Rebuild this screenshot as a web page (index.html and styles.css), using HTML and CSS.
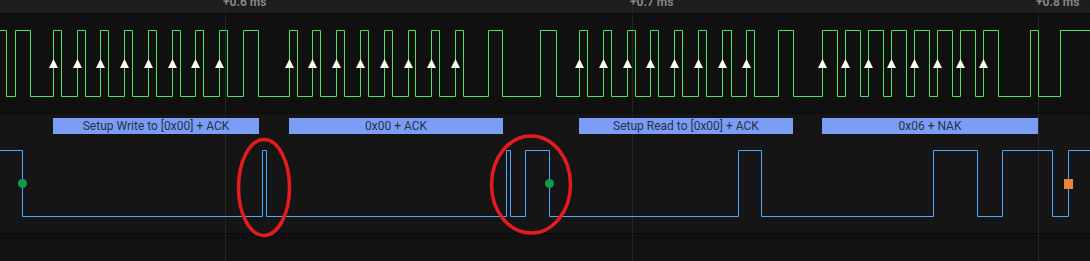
FILE: index.html
```html
<!DOCTYPE html>
<html lang="en">
<head>
    <meta charset="UTF-8">
    <title>I2C Capture</title>
    <link rel="stylesheet" href="styles.css">
</head>
<body>
    <div class="viewer">
        <!-- time ruler -->
        <div class="ruler">
            <span class="tick" style="left: 223px">+0.6 ms</span>
            <span class="tick" style="left: 630px">+0.7 ms</span>
            <span class="tick" style="left: 1036px">+0.8 ms</span>
        </div>

        <!-- SCL -->
        <div class="channel channel-scl">
            <svg class="wave" width="1090" height="99" viewBox="0 14 1090 99">
                <defs>
                    <path id="edge" d="M0.5 59 L-4 68 L5 68 Z" />
                </defs>
                <path class="trace scl" d="M0 30.5H6.5V96.5H15.5V30.5H30.5V96.5H53.5V30.5H61.5V96.5H77.5V30.5H85.5V96.5H100.5V30.5H108.5V96.5H124.5V30.5H132.5V96.5H148.5V30.5H156.5V96.5H172.5V30.5H180.5V96.5H195.5V30.5H203.5V96.5H219.5V30.5H227.5V96.5H243.5V30.5H258.5V96.5H289.5V30.5H297.5V96.5H312.5V30.5H320.5V96.5H336.5V30.5H344.5V96.5H360.5V30.5H368.5V96.5H384.5V30.5H392.5V96.5H408.5V30.5H415.5V96.5H431.5V30.5H439.5V96.5H455.5V30.5H463.5V96.5H488.5V30.5H502.5V96.5H540.5V30.5H556.5V96.5H579.5V30.5H587.5V96.5H603.5V30.5H611.5V96.5H627.5V30.5H635.5V96.5H650.5V30.5H658.5V96.5H674.5V30.5H682.5V96.5H698.5V30.5H706.5V96.5H722.5V30.5H731.5V96.5H746.5V30.5H754.5V96.5H778.5V30.5H793.5V96.5H822.5V30.5H837.5V96.5H845.5V30.5H860.5V96.5H868.5V30.5H883.5V96.5H891.5V30.5H906.5V96.5H914.5V30.5H929.5V96.5H937.5V30.5H952.5V96.5H960.5V30.5H975.5V96.5H983.5V30.5H998.5V96.5H1030.5V30.5H1038.5V96.5H1060.5V30.5H1090" />
                <g class="marker">
                    <use href="#edge" x="53" /><use href="#edge" x="77" /><use href="#edge" x="100" /><use href="#edge" x="124" />
                    <use href="#edge" x="148" /><use href="#edge" x="172" /><use href="#edge" x="195" /><use href="#edge" x="219" />
                    <use href="#edge" x="289" /><use href="#edge" x="312" /><use href="#edge" x="336" /><use href="#edge" x="360" />
                    <use href="#edge" x="384" /><use href="#edge" x="408" /><use href="#edge" x="431" /><use href="#edge" x="455" />
                    <use href="#edge" x="579" /><use href="#edge" x="603" /><use href="#edge" x="627" /><use href="#edge" x="650" />
                    <use href="#edge" x="674" /><use href="#edge" x="698" /><use href="#edge" x="722" /><use href="#edge" x="746" />
                    <use href="#edge" x="822" /><use href="#edge" x="845" /><use href="#edge" x="868" /><use href="#edge" x="891" />
                    <use href="#edge" x="914" /><use href="#edge" x="937" /><use href="#edge" x="960" /><use href="#edge" x="983" />
                </g>
            </svg>
        </div>

        <!-- SDA + decoded frames -->
        <div class="channel channel-sda">
            <div class="frame" style="left: 53px; width: 206px">Setup Write to [0x00] + ACK</div>
            <div class="frame" style="left: 289px; width: 214px">0x00 + ACK</div>
            <div class="frame" style="left: 579px; width: 214px">Setup Read to [0x00] + ACK</div>
            <div class="frame" style="left: 822px; width: 216px">0x06 + NAK</div>
            <svg class="wave" width="1090" height="119" viewBox="0 114 1090 119">
                <path class="trace sda" d="M0 150.5H22.5V216.5H262.5V150.5H266.5V216.5H506.5V150.5H510.5V216.5H525.5V150.5H549.5V216.5H738.5V150.5H761.5V216.5H933.5V150.5H977.5V216.5H1002.5V150.5H1052.5V216.5H1068.5V150.5H1090" />
                <circle class="start" cx="22.5" cy="183.5" r="4.5" />
                <circle class="start" cx="549.5" cy="183.5" r="4.5" />
                <rect class="stop" x="1064" y="179" width="9" height="10" />
            </svg>
        </div>

        <div class="spare"></div>

        <!-- hand-drawn annotations -->
        <svg class="notes" width="1090" height="261">
            <ellipse cx="264" cy="187.5" rx="25.5" ry="48" />
            <ellipse cx="531" cy="184.5" rx="39.5" ry="48.5" />
        </svg>
    </div>
</body>
</html>
```

FILE: styles.css
```css
body {
    margin: 0;
    background: #111111;
    font-family: Roboto, "Liberation Sans", sans-serif;
}

.viewer {
    position: relative;
    width: 1090px;
    height: 261px;
    overflow: hidden;
    display: flex;
    flex-direction: column;
}

/* grid lines at each 0.1 ms */
.ruler, .channel, .spare {
    background-image: linear-gradient(90deg,
        transparent 225px, #252525 225px, #252525 226px, transparent 226px,
        transparent 632px, #252525 632px, #252525 633px, transparent 633px,
        transparent 1038px, #252525 1038px, #252525 1039px, transparent 1039px);
}

.ruler {
    position: relative;
    height: 13px;
    background-color: #1e1e1e;
    border-bottom: 1px solid #0a0a0a;
    overflow: hidden;
}

.tick {
    position: absolute;
    top: -6px;
    font-size: 12px;
    font-weight: bold;
    color: #858585;
    line-height: 16px;
    white-space: nowrap;
}

.channel {
    position: relative;
    border-bottom: 1px solid #0a0a0a;
}

.channel-scl {
    height: 99px;
    background-color: #101010;
}

.channel-sda {
    height: 119px;
    background-color: #151515;
}

.spare {
    flex: 1;
    background-color: #111111;
}

.wave {
    display: block;
}

.trace {
    fill: none;
    stroke-width: 1;
}

.scl {
    stroke: #4fe35c;
}

.sda {
    stroke: #4aa8ff;
}

.marker {
    fill: #ffffff;
}

.start {
    fill: #0e9b4a;
}

.stop {
    fill: #e8843a;
}

/* decoded I2C frames */
.frame {
    position: absolute;
    top: 4px;
    height: 16px;
    background: #7c9df5;
    color: #28304a;
    font-size: 12px;
    line-height: 16px;
    text-align: center;
    white-space: nowrap;
    overflow: hidden;
}

.notes {
    position: absolute;
    top: 0;
    left: 0;
    pointer-events: none;
}

.notes ellipse {
    fill: none;
    stroke: #e51b20;
    stroke-width: 3.5;
}
```
